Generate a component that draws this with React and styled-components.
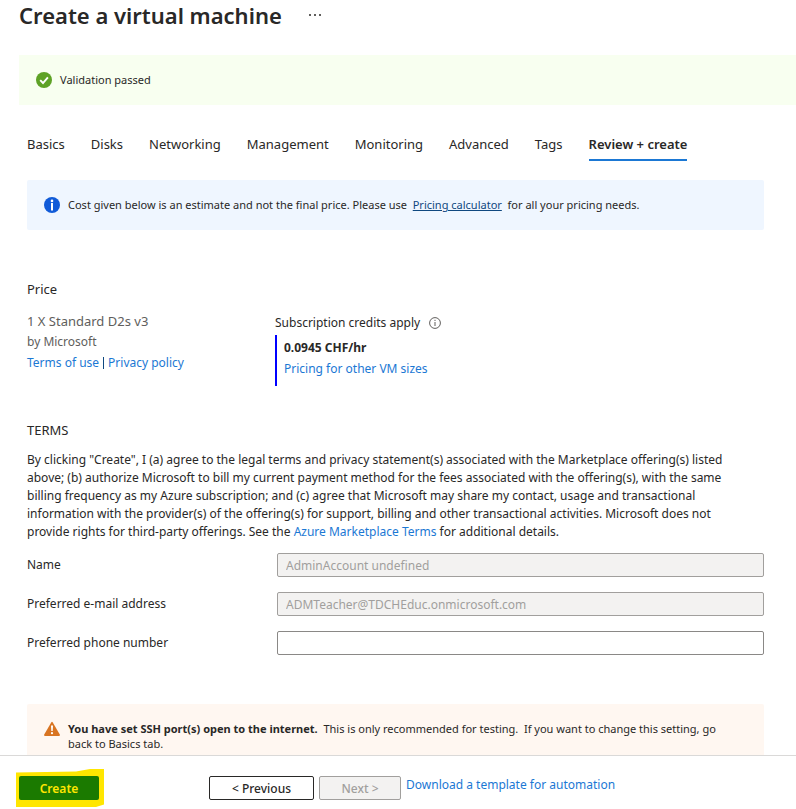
import React, { useState } from "react";
import styled, { createGlobalStyle } from "styled-components";

const tabs = [
  "Basics",
  "Disks",
  "Networking",
  "Management",
  "Monitoring",
  "Advanced",
  "Tags",
  "Review + create",
];

function App() {
  const [active, setActive] = useState("Review + create");
  const [phone, setPhone] = useState("");

  return (
    <Container>
      <GlobalStyle />
      <Main>
        <Header>
          <h1>Create a virtual machine</h1>
          <MoreButton type="button" aria-label="More">
            <svg width="14" height="4" viewBox="0 0 14 4" fill="#605e5c">
              <rect x="1" y="1" width="2" height="2" />
              <rect x="6" y="1" width="2" height="2" />
              <rect x="11" y="1" width="2" height="2" />
            </svg>
          </MoreButton>
        </Header>

        <Validation>
          <CheckIcon />
          <span>Validation passed</span>
        </Validation>

        <Content>
          <Tabs>
            {tabs.map((tab) => (
              <Tab
                key={tab}
                type="button"
                $active={tab === active}
                onClick={() => setActive(tab)}
              >
                {tab}
              </Tab>
            ))}
          </Tabs>

          <InfoBar>
            <InfoIcon />
            <p>
              Cost given below is an estimate and not the final price. Please
              use&nbsp; <a href="#calculator">Pricing calculator</a>&nbsp; for
              all your pricing needs.
            </p>
          </InfoBar>

          <SectionTitle>Price</SectionTitle>
          <PriceRow>
            <Offer>
              <OfferName>1 X Standard D2s v3</OfferName>
              <span>by Microsoft</span>
              <OfferLinks>
                <Link href="#terms">Terms of use</Link>
                <i />
                <Link href="#privacy">Privacy policy</Link>
              </OfferLinks>
            </Offer>
            <Credits>
              <CreditsTitle>
                Subscription credits apply
                <HintIcon />
              </CreditsTitle>
              <Cost>
                <b>0.0945 CHF/hr</b>
                <Link href="#sizes">Pricing for other VM sizes</Link>
              </Cost>
            </Credits>
          </PriceRow>

          <TermsTitle>TERMS</TermsTitle>
          <Terms>
            By clicking "Create", I (a) agree to the legal terms and privacy
            statement(s) associated with the Marketplace offering(s) listed
            above; (b) authorize Microsoft to bill my current payment method for
            the fees associated with the offering(s), with the same billing
            frequency as my Azure subscription; and (c) agree that Microsoft may
            share my contact, usage and transactional information with the
            provider(s) of the offering(s) for support, billing and other
            transactional activities. Microsoft does not provide rights for
            third-party offerings. See the{" "}
            <Link href="#marketplace">Azure Marketplace Terms</Link> for
            additional details.
          </Terms>

          <Form>
            <Field>
              <label htmlFor="name">Name</label>
              <input id="name" defaultValue="AdminAccount undefined" disabled />
            </Field>
            <Field>
              <label htmlFor="email">Preferred e-mail address</label>
              <input
                id="email"
                type="email"
                defaultValue="ADMTeacher@TDCHEduc.onmicrosoft.com"
                disabled
              />
            </Field>
            <Field>
              <label htmlFor="phone">Preferred phone number</label>
              <input
                id="phone"
                type="tel"
                value={phone}
                onChange={(e) => setPhone(e.target.value)}
              />
            </Field>
          </Form>

          <WarningBar>
            <WarningIcon />
            <p>
              <b>You have set SSH port(s) open to the internet.</b>&nbsp; This
              is only recommended for testing.&nbsp; If you want to change this
              setting, go back to Basics tab.
            </p>
          </WarningBar>
        </Content>
      </Main>

      <Footer>
        <CreateWrap>
          <Marker viewBox="0 0 88 38" aria-hidden="true">
            <path
              d="M0 3.500L60 2.500L74 0H88V35.500L80 38H0Z"
              fill="#ffe600"
            />
          </Marker>
          <CreateButton type="button">Create</CreateButton>
        </CreateWrap>
        <Button type="button" $width="105px">
          &lt; Previous
        </Button>
        <Button type="button" $width="82px" disabled>
          Next &gt;
        </Button>
        <Link href="#template">Download a template for automation</Link>
      </Footer>
    </Container>
  );
}

export default App;

const CheckIcon = () => (
  <svg width="16" height="16" viewBox="0 0 16 16">
    <circle cx="8" cy="8" r="8" fill="#5ea226" />
    <path
      d="M4.200 8.200L7 11L11.900 5.300"
      fill="none"
      stroke="#fff"
      strokeWidth="1.900"
    />
  </svg>
);

const InfoIcon = () => (
  <svg width="16" height="16" viewBox="0 0 16 16">
    <circle cx="8" cy="8" r="8" fill="#115bd8" />
    <circle cx="8" cy="3.900" r="1.300" fill="#fff" />
    <rect x="7" y="6" width="2" height="7.500" fill="#fff" />
  </svg>
);

const HintIcon = () => (
  <svg width="12" height="12" viewBox="0 0 12 12">
    <circle cx="6" cy="6" r="5.400" fill="none" stroke="#605e5c" />
    <rect x="5.500" y="2.800" width="1" height="1.200" fill="#605e5c" />
    <rect x="5.500" y="5" width="1" height="4" fill="#605e5c" />
  </svg>
);

const WarningIcon = () => (
  <svg width="16" height="16" viewBox="0 0 16 16">
    <path
      d="M7.200 1.400Q8 0.200 8.800 1.400L15.800 13.600Q16.200 15 15 15H1Q-0.200 15 0.200 13.600Z"
      fill="#d87422"
    />
    <path d="M7 4.500H9L8.700 10H7.300Z" fill="#fff" />
    <circle cx="8" cy="12.200" r="1.100" fill="#fff" />
  </svg>
);

const GlobalStyle = createGlobalStyle`
  * {
    box-sizing: border-box;
  }

  body {
    margin: 0;
    background: #fff;
    color: #292827;
    font-family: "Noto Sans", "Open Sans", sans-serif;
    font-size: 12px;
    line-height: 18px;
  }

  p {
    margin: 0;
  }

  button, input {
    font-family: inherit;
    font-size: inherit;
  }

  svg {
    display: block;
    flex-shrink: 0;
  }
`;

const Container = styled.div`
  display: flex;
  flex-direction: column;
  height: 100vh;
`;

const Main = styled.main`
  flex: 1;
  min-height: 0;
  overflow: hidden;
`;

const Header = styled.header`
  display: flex;
  align-items: center;
  gap: 26px;
  height: 30px;
  padding-left: 19px;

  h1 {
    margin: 0;
    font-size: 22px;
    font-weight: 600;
    line-height: 30px;
  }
`;

const MoreButton = styled.button`
  padding: 0;
  border: 0;
  background: none;
  cursor: pointer;
`;

const Validation = styled.div`
  display: flex;
  align-items: center;
  gap: 8px;
  height: 50px;
  margin: 25px 0 0 19px;
  padding: 0 17px;
  background: #f8fff0;
  font-size: 11px;
`;

const Content = styled.div`
  padding: 0 32px 0 27px;
`;

const Tabs = styled.nav`
  display: flex;
  gap: 26px;
  margin-top: 24px;
`;

const Tab = styled.button`
  height: 32px;
  padding: 0;
  border: 0;
  border-bottom: 2px solid
    ${({ $active }) => ($active ? "#1b78d4" : "transparent")};
  background: none;
  color: #292827;
  font-size: 13px;
  font-weight: ${({ $active }) => ($active ? 600 : 400)};
  white-space: nowrap;
  cursor: pointer;
`;

const Bar = styled.div`
  display: flex;
  gap: 8px;
  padding: 17px 26px 17px 17px;
  border-radius: 2px;
  font-size: 11px;
  line-height: 15px;
`;

const InfoBar = styled(Bar)`
  margin-top: 19px;
  background: #eff6ff;

  a {
    color: #0f4880;
  }
`;

const WarningBar = styled(Bar)`
  margin-top: 49px;
  background: #fff7f1;
`;

const SectionTitle = styled.h2`
  margin: 50px 0 0;
  font-size: 13px;
  font-weight: 400;
  line-height: 18px;
`;

const TermsTitle = styled(SectionTitle)`
  margin-top: 35px;
`;

const PriceRow = styled.div`
  display: flex;
  margin-top: 14px;
`;

const Offer = styled.div`
  display: flex;
  flex-direction: column;
  width: 248px;
  gap: 3px;
  color: #605e5c;
`;

const OfferName = styled.span`
  font-size: 13px;
`;

const OfferLinks = styled.div`
  display: flex;
  align-items: center;
  gap: 4px;

  i {
    width: 1px;
    height: 12px;
    background: #0f4880;
  }
`;

const Link = styled.a`
  color: #1b78d4;
  text-decoration: none;

  &:hover {
    text-decoration: underline;
  }
`;

const Credits = styled.div`
  display: flex;
  flex-direction: column;
  gap: 3px;
  padding-top: 2px;
`;

const CreditsTitle = styled.div`
  display: flex;
  align-items: center;
  gap: 9px;
`;

const Cost = styled.div`
  display: flex;
  flex-direction: column;
  gap: 3px;
  height: 51px;
  padding: 4px 0 0 7px;
  border-left: 2px solid #0000ff;
`;

const Terms = styled.p`
  margin-top: 12px;
  padding-right: 16px;
`;

const Form = styled.form`
  display: flex;
  flex-direction: column;
  gap: 15px;
  margin-top: 12px;
`;

const Field = styled.div`
  display: flex;
  align-items: center;

  label {
    width: 250px;
  }

  input {
    flex: 1;
    min-width: 0;
    height: 24px;
    padding: 0 8px;
    border: 1px solid #8a8886;
    border-radius: 2px;
    outline: none;
    background: #fff;
    color: #292827;
  }

  input:disabled {
    border-color: #a19f9d;
    background: #f3f2f1;
    color: #a19f9d;
  }
`;

const Footer = styled.footer`
  display: flex;
  align-items: flex-start;
  gap: 5px;
  height: 54px;
  padding: 20px 19px 0;
  border-top: 1px solid #dad9d8;
`;

const CreateWrap = styled.div`
  position: relative;
  margin-right: 105px;
`;

/* highlighter stroke around the primary button */
const Marker = styled.svg`
  position: absolute;
  top: -7px;
  left: -3px;
  width: 88px;
  height: 38px;
`;

const Button = styled.button`
  width: ${({ $width }) => $width};
  height: 24px;
  padding: 0;
  border: 1px solid #292827;
  border-radius: 2px;
  background: #fff;
  color: #292827;
  font-weight: 500;
  cursor: pointer;

  &:disabled {
    border-color: #a19f9d;
    background: #f3f2f1;
    color: #a19f9d;
    cursor: default;
  }
`;

const CreateButton = styled.button`
  position: relative;
  width: 80px;
  height: 24px;
  padding: 0;
  border: 0;
  border-radius: 2px;
  background: #1b7a00;
  color: #ffe600;
  font-weight: 600;
  cursor: pointer;
`;
